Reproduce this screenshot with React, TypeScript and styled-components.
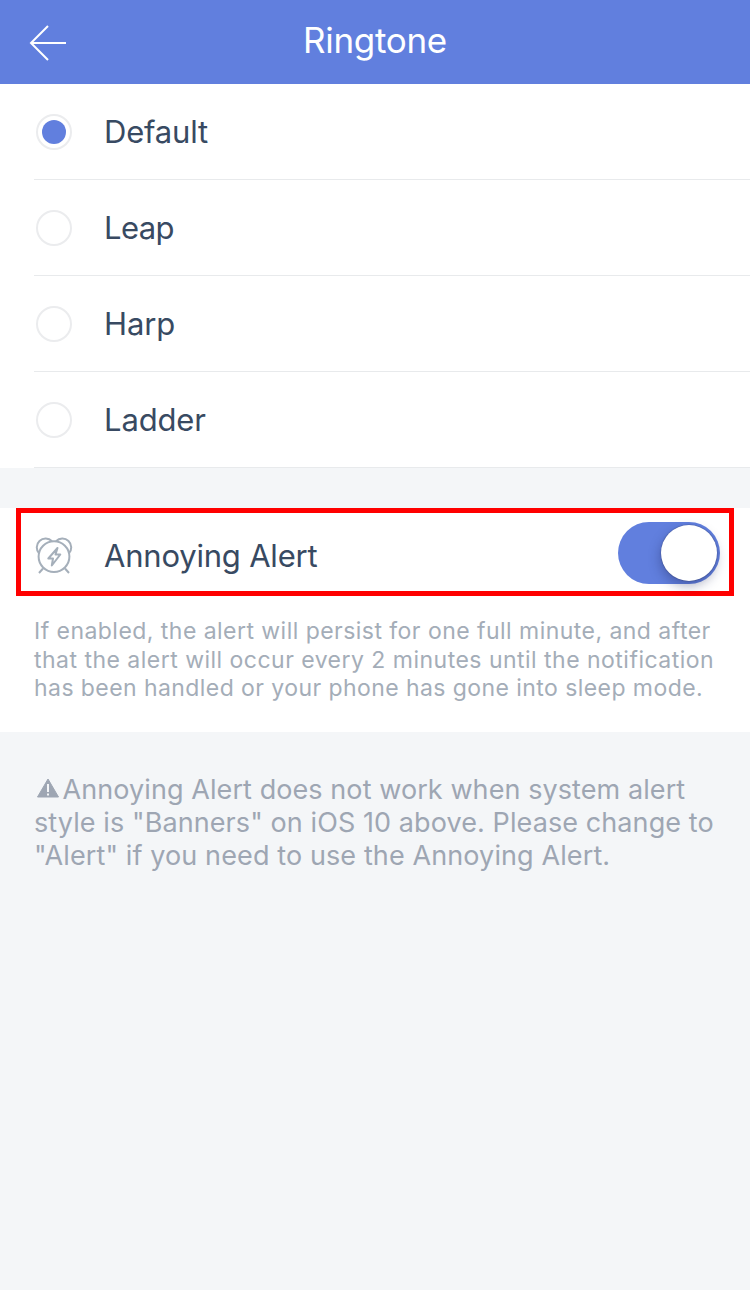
import React from "react";
import styled, { createGlobalStyle } from "styled-components";

const GlobalStyle = createGlobalStyle`
  * { box-sizing: border-box; }
  body {
    margin: 0;
    background: #f4f6f8;
    font-family: Inter, "Liberation Sans", sans-serif;
  }
`;

const Screen = styled.main`
  width: 750px;
  height: 1290px;
  display: flex;
  flex-direction: column;
  background: #f4f6f8;
`;

const Header = styled.header`
  height: 84px;
  flex: none;
  display: grid;
  grid-template-columns: 96px 1fr 96px;
  align-items: center;
  background: #617fde;
  color: #fff;
`;

const BackButton = styled.button`
  height: 84px;
  padding: 0 0 0 28px;
  border: 0;
  background: none;
  color: inherit;
  text-align: left;
  svg { display: block; margin-top: 1px; }
`;

const Title = styled.h1`
  margin: 0;
  padding-bottom: 4px;
  text-align: center;
  font-size: 35px;
  line-height: 42px;
  font-weight: 370;
  letter-spacing: -0.3px;
`;

const Options = styled.ul`
  margin: 0;
  padding: 0 0 0 34px;
  list-style: none;
  background: #fff;
`;

const Option = styled.li`
  height: 96px;
  display: flex;
  align-items: center;
  padding-left: 2px;
  border-bottom: 1px solid #e8eaec;
`;

const Radio = styled.span<{ $checked: boolean }>`
  width: 36px;
  height: 36px;
  flex: none;
  display: grid;
  place-items: center;
  margin-right: 32px;
  border: 2px solid #ebecee;
  border-radius: 50%;
  &::after {
    content: "";
    width: 24px;
    height: 24px;
    border-radius: 50%;
    background: ${(p) => (p.$checked ? "#617fde" : "transparent")};
  }
`;

const Label = styled.span<{ $spacing: number }>`
  color: #384a62;
  font-size: 31px;
  line-height: 38px;
  letter-spacing: ${(p) => p.$spacing}px;
  white-space: nowrap;
`;

const AlertSection = styled.section`
  height: 224px;
  flex: none;
  margin-top: 40px;
  padding: 0 16px;
  background: #fff;
`;

const AlertRow = styled.div`
  height: 88px;
  display: flex;
  align-items: center;
  padding: 0 9px 0 14px;
  border: 5px solid #ff0000;
  ${Label} { flex: 1; margin-left: 31px; padding-top: 7px; }
`;

const AlarmIcon = styled.svg`
  flex: none;
  margin-top: 7px;
`;

const Switch = styled.span`
  width: 102px;
  height: 62px;
  display: flex;
  justify-content: flex-end;
  align-items: center;
  padding-right: 3px;
  margin-top: 2px;
  border-radius: 31px;
  background: #617fde;
`;

const Knob = styled.span`
  width: 56px;
  height: 56px;
  border-radius: 50%;
  background: #fff;
  box-shadow: 0 0 1px 0.5px rgba(40, 50, 80, 0.35), -1px 5px 12px rgba(30, 40, 90, 0.36);
`;

const Copy = styled.p<{ $size: number; $leading: number }>`
  margin: 0;
  font-size: ${(p) => p.$size}px;
  line-height: ${(p) => p.$leading}px;
  color: #a4adb8;
  white-space: nowrap;
`;

const Line = styled.span<{ $spacing: number }>`
  display: block;
  letter-spacing: ${(p) => p.$spacing}px;
`;

const Description = styled(Copy)`
  padding: 21px 18px 0;
`;

const Note = styled(Copy)`
  padding: 41px 34px 0;
  color: #9ea6b3;
  svg { margin: 0 2.5px 0 2px; vertical-align: 1px; }
`;

const options = [
  { name: "Default", checked: true, spacing: -0.2 },
  { name: "Leap", checked: false, spacing: -0.6 },
  { name: "Harp", checked: false, spacing: -0.1 },
  { name: "Ladder", checked: false, spacing: -0.15 },
];

export default function App() {
  return (
    <>
      <GlobalStyle />
      <Screen>
        <Header>
          <BackButton aria-label="Back">
            <svg width="40" height="38" viewBox="0 0 40 38" fill="none" stroke="currentColor" strokeWidth="2">
              <path d="M20 2 3 19l17 17M3 19h35" />
            </svg>
          </BackButton>
          <Title>Ringtone</Title>
        </Header>
        <Options>
          {options.map((o) => (
            <Option key={o.name}>
              <Radio $checked={o.checked} />
              <Label $spacing={o.spacing}>{o.name}</Label>
            </Option>
          ))}
        </Options>
        <AlertSection>
          <AlertRow>
            <AlarmIcon width="38" height="38" viewBox="0 0 38 38" fill="none" stroke="#a5afba" strokeWidth="2">
              <circle cx="19" cy="19.6" r="15.4" />
              <path d="M4.2 16.5A8.3 8.3 0 1 1 17 4.3M33.8 16.5A8.3 8.3 0 1 0 21 4.3M8 31.5l-4 4.5M30 31.5l4 4.5" />
              <path d="M22.5 11 13.3 21.5H18L16.8 28.5 25.3 17.5h-4.8z" strokeLinejoin="round" />
            </AlarmIcon>
            <Label $spacing={-0.2}>Annoying Alert</Label>
            <Switch role="switch" aria-checked="true">
              <Knob />
            </Switch>
          </AlertRow>
          <Description $size={23} $leading={28.6}>
            <Line $spacing={0.46}>If enabled, the alert will persist for one full minute, and after</Line>
            <Line $spacing={0.48}>that the alert will occur every 2 minutes until the notification</Line>
            <Line $spacing={0.43}>has been handled or your phone has gone into sleep mode.</Line>
          </Description>
        </AlertSection>
        <Note $size={27} $leading={33}>
          <Line $spacing={0.08}>
            <svg width="24" height="20" viewBox="0 0 24 20">
              <path d="M12 1 22.5 19h-21z" fill="#9ea6b3" stroke="#9ea6b3" strokeLinejoin="round" />
              <path d="M12 6v8M12 15.5v2" stroke="#f4f6f8" strokeWidth="2" />
            </svg>
            Annoying Alert does not work when system alert
          </Line>
          <Line $spacing={0.09}>style is "Banners" on iOS 10 above. Please change to</Line>
          <Line $spacing={0.11}>"Alert" if you need to use the Annoying Alert.</Line>
        </Note>
      </Screen>
    </>
  );
}
